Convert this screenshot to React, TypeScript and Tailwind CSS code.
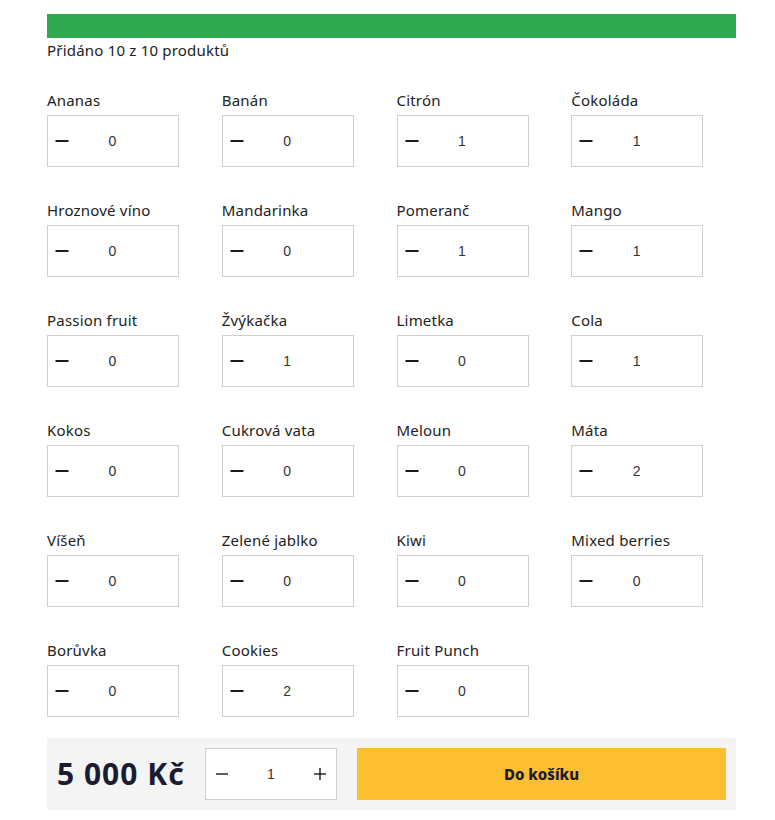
import React from "react";

interface Flavor {
  name: string;
  qty: number;
}

const flavors: Flavor[] = [
  { name: "Ananas", qty: 0 },
  { name: "Banán", qty: 0 },
  { name: "Citrón", qty: 1 },
  { name: "Čokoláda", qty: 1 },
  { name: "Hroznové víno", qty: 0 },
  { name: "Mandarinka", qty: 0 },
  { name: "Pomeranč", qty: 1 },
  { name: "Mango", qty: 1 },
  { name: "Passion fruit", qty: 0 },
  { name: "Žvýkačka", qty: 1 },
  { name: "Limetka", qty: 0 },
  { name: "Cola", qty: 1 },
  { name: "Kokos", qty: 0 },
  { name: "Cukrová vata", qty: 0 },
  { name: "Meloun", qty: 0 },
  { name: "Máta", qty: 2 },
  { name: "Víšeň", qty: 0 },
  { name: "Zelené jablko", qty: 0 },
  { name: "Kiwi", qty: 0 },
  { name: "Mixed berries", qty: 0 },
  { name: "Borůvka", qty: 0 },
  { name: "Cookies", qty: 2 },
  { name: "Fruit Punch", qty: 0 },
];

const MinusThick = () => (
  <svg width="14" height="14" viewBox="0 0 14 14" className="text-[#1b1b1b]">
    <line x1="0.5" y1="7" x2="13.5" y2="7" stroke="currentColor" strokeWidth="2" />
  </svg>
);

const MinusThin = () => (
  <svg width="14" height="14" viewBox="0 0 14 14" className="text-[#1b1b1b]">
    <line x1="1" y1="7" x2="13" y2="7" stroke="currentColor" strokeWidth="1.4" />
  </svg>
);

const PlusThin = () => (
  <svg width="14" height="14" viewBox="0 0 14 14" className="text-[#1b1b1b]">
    <line x1="1" y1="7" x2="13" y2="7" stroke="currentColor" strokeWidth="1.4" />
    <line x1="7" y1="1" x2="7" y2="13" stroke="currentColor" strokeWidth="1.4" />
  </svg>
);

const FlavorItem: React.FC<{ flavor: Flavor }> = ({ flavor }) => (
  <div className="flex flex-col">
    <span className="text-[15px] leading-5 tracking-[0.2px] text-[#222]">{flavor.name}</span>
    <div className="mt-[5px] w-[132px] h-[52px] border border-[#cfcfcf] flex items-center bg-white">
      <button className="w-[14px] h-full flex items-center justify-center ml-[7px]">
        <MinusThick />
      </button>
      <span className="flex-1 text-center pr-[22px] text-[14px] text-[#333] font-['Liberation_Sans',Arial,sans-serif]">
        {flavor.qty}
      </span>
    </div>
  </div>
);

export default function App() {
  return (
    <div className="bg-white min-h-screen font-['Noto_Sans','Lato',sans-serif]">
      <div className="w-[689px] ml-[47px] pt-[14px] pb-[10px]">
        <div className="h-[24px] bg-[#2fa84f]" />
        <div className="mt-[2px] text-[15px] leading-5 tracking-[0.2px] text-[#222]">Přidáno 10 z 10 produktů</div>

        <div className="mt-[30px] grid grid-cols-4 gap-x-[10px] gap-y-[33px]">
          {flavors.map((f) => (
            <FlavorItem key={f.name} flavor={f} />
          ))}
        </div>

        <div className="mt-[21px] bg-[#f4f4f4] h-[72px] flex items-center px-[10px]">
          <div className="text-[30px] leading-none font-bold tracking-[1px] text-[#1c1c30] w-[148px] whitespace-nowrap">
            5 000 Kč
          </div>
          <div className="w-[132px] h-[52px] border border-[#cfcfcf] bg-white flex items-center justify-between px-[9px]">
            <MinusThin />
            <span className="text-[14px] text-[#333] font-['Liberation_Sans',Arial,sans-serif]">1</span>
            <PlusThin />
          </div>
          <button className="ml-[20px] w-[369px] h-[52px] bg-[#fdbe30] text-[15px] font-extrabold text-[#1c1c30]">
            Do košíku
          </button>
        </div>
      </div>
    </div>
  );
}
